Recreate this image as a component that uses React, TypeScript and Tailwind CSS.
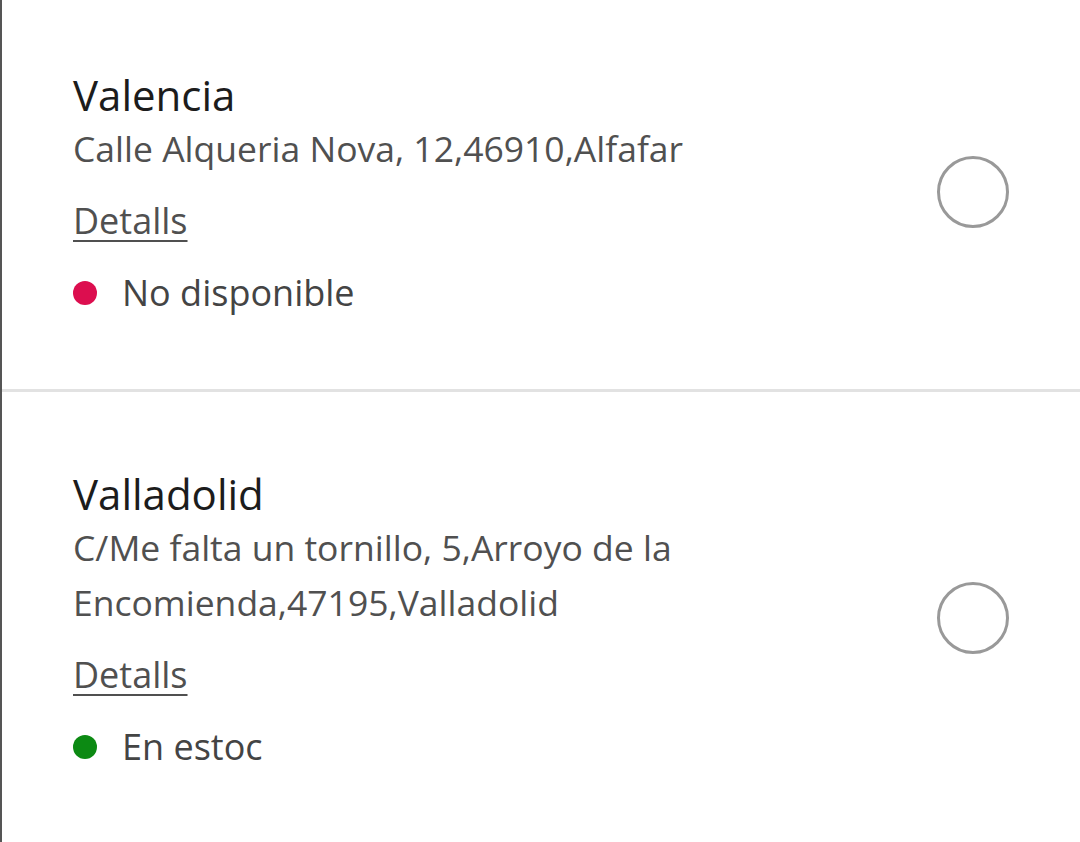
import React from 'react'

type Store = {
  city: string
  address: string
  inStock: boolean
}

const stores: Store[] = [
  { city: 'Valencia', address: 'Calle Alqueria Nova, 12,46910,Alfafar', inStock: false },
  { city: 'Valladolid', address: 'C/Me falta un tornillo, 5,Arroyo de la Encomienda,47195,Valladolid', inStock: true },
]

function StoreRow({ store, first }: { store: Store; first: boolean }) {
  return (
    <div
      className={
        'flex items-center justify-between pl-[71px] pr-[71px] ' +
        (first ? 'pt-[69px] pb-[69px]' : 'pt-[76px] pb-[68px] border-t-[3px] border-[#e2e2e2]')
      }
    >
      <div className="flex flex-col max-w-[620px]">
        <div className="text-[42px] leading-[52px] text-[#1c1c1c]">{store.city}</div>
        <div className="text-[35.5px] leading-[55px] text-[#505050]">{store.address}</div>
        <a className="mt-[17px] text-[36px] leading-[55px] text-[#505050] underline decoration-2 underline-offset-[6px] w-fit">
          Detalls
        </a>
        <div className="mt-[17px] flex items-center gap-[25px]">
          <span
            className={
              'w-[24px] h-[24px] rounded-full shrink-0 ' + (store.inStock ? 'bg-[#0c8a13]' : 'bg-[#dc0e4f]')
            }
          />
          <span className="text-[36px] leading-[55px] text-[#444444]">
            {store.inStock ? 'En estoc' : 'No disponible'}
          </span>
        </div>
      </div>
      <div className="w-[72px] h-[72px] mb-[6px] rounded-full border-[3px] border-[#999999] shrink-0" />
    </div>
  )
}

export default function App() {
  return (
    <div
      className="w-[1080px] h-[842px] overflow-hidden bg-white border-l-2 border-[#555555]"
      style={{ fontFamily: '"Open Sans", "Noto Sans", sans-serif' }}
    >
      {stores.map((s, i) => (
        <StoreRow key={s.city} store={s} first={i === 0} />
      ))}
    </div>
  )
}
